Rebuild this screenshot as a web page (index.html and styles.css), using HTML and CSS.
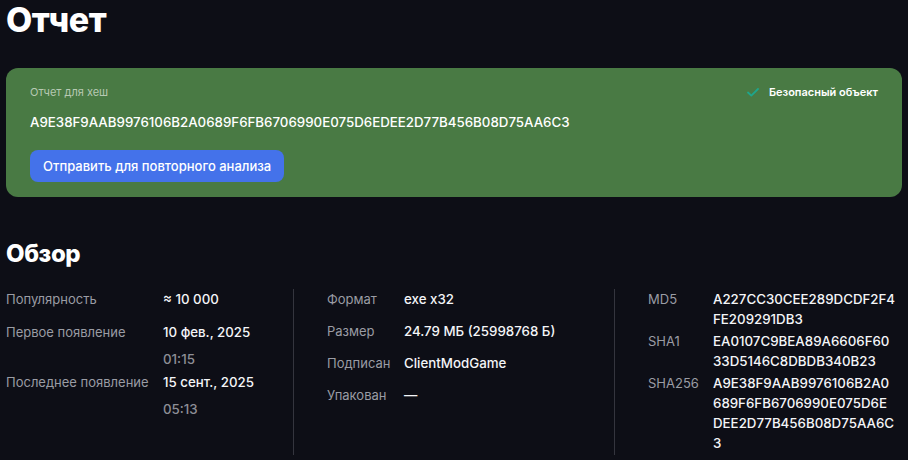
FILE: index.html
```html
<!DOCTYPE html>
<html lang="ru">
<head>
<meta charset="utf-8">
<link rel="stylesheet" href="styles.css">
</head>
<body>
<div class="page">
  <h1 class="title">Отчет</h1>
  <section class="card">
    <div class="card-head">
      <span class="card-label">Отчет для хеш</span>
      <span class="safe">
        <svg class="check" width="12" height="9" viewBox="0 0 12 9"><path d="M1 4.5 L4.3 7.6 L11 1" fill="none" stroke="#1ea68c" stroke-width="1.8" stroke-linecap="round" stroke-linejoin="round"/></svg>
        Безопасный объект
      </span>
    </div>
    <div class="card-hash">A9E38F9AAB9976106B2A0689F6FB6706990E075D6EDEE2D77B456B08D75AA6C3</div>
    <button class="btn">Отправить для повторного анализа</button>
  </section>
  <h2 class="subtitle">Обзор</h2>
  <div class="overview">
    <div class="col col-1">
      <div class="row"><span class="lbl">Популярность</span><div class="val">≈ 10 000</div></div>
      <div class="row"><span class="lbl">Первое появление</span><div class="val">10 фев., 2025<div class="time">01:15</div></div></div>
      <div class="row"><span class="lbl">Последнее появление</span><div class="val">15 сент., 2025<div class="time">05:13</div></div></div>
    </div>
    <div class="col col-2">
      <div class="row"><span class="lbl">Формат</span><div class="val">exe x32</div></div>
      <div class="row"><span class="lbl">Размер</span><div class="val">24.79 МБ (25998768 Б)</div></div>
      <div class="row"><span class="lbl">Подписан</span><div class="val">ClientModGame</div></div>
      <div class="row"><span class="lbl">Упакован</span><div class="val">—</div></div>
    </div>
    <div class="col col-3">
      <div class="row"><span class="lbl">MD5</span><div class="val hash">A227CC30CEE289DCDF2F4FE209291DB3</div></div>
      <div class="row"><span class="lbl">SHA1</span><div class="val hash">EA0107C9BEA89A6606F6033D5146C8DBDB340B23</div></div>
      <div class="row"><span class="lbl">SHA256</span><div class="val hash">A9E38F9AAB9976106B2A0689F6FB6706990E075D6EDEE2D77B456B08D75AA6C3</div></div>
    </div>
  </div>
</div>
</body>
</html>
```

FILE: styles.css
```css
* { box-sizing: border-box; }
html, body {
  margin: 0;
  background: #0d0e16;
}
body {
  font-family: Inter, "Noto Sans", sans-serif;
  color: #f3f4f6;
}
.page {
  padding: 0 6px;
}
.title {
  margin: 0;
  font-size: 34px;
  line-height: 40px;
  font-weight: 800;
  letter-spacing: -0.5px;
  color: #ffffff;
}
.card {
  margin-top: 28px;
  background: #497a44;
  border-radius: 12px;
  padding: 16px 24px 15px;
}
.card-head {
  display: flex;
  justify-content: space-between;
  align-items: center;
  height: 16px;
}
.card-label {
  font-size: 11px;
  line-height: 16px;
  color: #b7c9b3;
}
.safe {
  display: flex;
  align-items: center;
  gap: 10px;
  font-size: 11px;
  line-height: 16px;
  font-weight: 600;
  color: #ffffff;
}
.card-hash {
  margin-top: 12px;
  font-size: 13.3px;
  line-height: 20px;
  font-weight: 500;
  color: #ffffff;
}
.btn {
  display: block;
  margin-top: 18px;
  height: 32px;
  padding: 0 13px;
  border: 0;
  border-radius: 8px;
  background: #4472ea;
  color: #ffffff;
  font-family: Inter, "Noto Sans", sans-serif;
  font-size: 13px;
  font-weight: 500;
}
.subtitle {
  margin: 41px 0 0;
  font-size: 24px;
  line-height: 32px;
  font-weight: 800;
  letter-spacing: -0.4px;
  color: #ffffff;
}
.overview {
  margin-top: 19px;
  display: grid;
  grid-template-columns: 287px 321px 1fr;
}
.col {
  display: flex;
  flex-direction: column;
  padding-bottom: 2px;
}
.col-2, .col-3 {
  border-left: 1px solid #34353e;
  padding-left: 33px;
}
.col-3 { padding-right: 6px; }
.col-1 { gap: 13px; }
.col-2 { gap: 12px; }
.col-3 { gap: 2px; }
.row {
  display: grid;
  font-size: 13px;
  line-height: 20px;
}
.col-1 .row { grid-template-columns: 157px 1fr; }
.col-2 .row { grid-template-columns: 77px 1fr; }
.col-3 .row { grid-template-columns: 65px 1fr; }
.lbl {
  color: #9a9ca4;
}
.val {
  color: #f4f5f8;
  font-weight: 500;
  font-size: 13.3px;
}
.time {
  margin-top: 7px;
  margin-bottom: -10px;
  color: #8d8f97;
  font-weight: 500;
}
.hash {
  font-size: 13.3px;
  word-break: break-all;
}
```
